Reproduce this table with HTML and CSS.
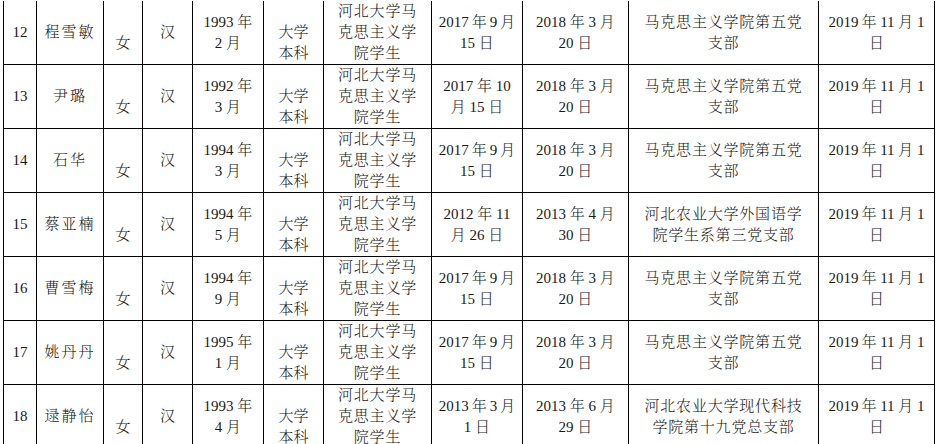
FILE: index.html
```html
<!DOCTYPE html>
<html lang="zh">
<head>
<meta charset="utf-8">
<title>名单</title>
<link rel="stylesheet" href="styles.css">
</head>
<body>
<table class="roster">
  <colgroup>
    <col class="c-no"><col class="c-name"><col class="c-sex"><col class="c-nat"><col class="c-birth"><col class="c-edu"><col class="c-unit"><col class="c-d1"><col class="c-d2"><col class="c-branch"><col class="c-d3">
  </colgroup>
  <tbody>
    <tr>
      <td>12</td><td class="name">程雪敏</td><td><br>女</td><td>汉</td><td>1993 年<br>2 月</td><td><br>大学<br>本科</td><td class="wide">河北大学马<br>克思主义学<br>院学生</td><td>2017&thinsp;年&thinsp;9&thinsp;月<br>15 日</td><td>2018 年 3 月<br>20 日</td><td class="wide">马克思主义学院第五党<br>支部</td><td>2019&thinsp;年 11 月 1<br>日</td>
    </tr>
    <tr>
      <td>13</td><td class="name">尹璐</td><td><br>女</td><td>汉</td><td>1992 年<br>3 月</td><td><br>大学<br>本科</td><td class="wide">河北大学马<br>克思主义学<br>院学生</td><td>2017 年 10<br>月 15 日</td><td>2018 年 3 月<br>20 日</td><td class="wide">马克思主义学院第五党<br>支部</td><td>2019&thinsp;年 11 月 1<br>日</td>
    </tr>
    <tr>
      <td>14</td><td class="name">石华</td><td><br>女</td><td>汉</td><td>1994 年<br>3 月</td><td><br>大学<br>本科</td><td class="wide">河北大学马<br>克思主义学<br>院学生</td><td>2017&thinsp;年&thinsp;9&thinsp;月<br>15 日</td><td>2018 年 3 月<br>20 日</td><td class="wide">马克思主义学院第五党<br>支部</td><td>2019&thinsp;年 11 月 1<br>日</td>
    </tr>
    <tr>
      <td>15</td><td class="name">蔡亚楠</td><td><br>女</td><td>汉</td><td>1994 年<br>5 月</td><td><br>大学<br>本科</td><td class="wide">河北大学马<br>克思主义学<br>院学生</td><td>2012 年 11<br>月 26 日</td><td>2013 年 4 月<br>30 日</td><td class="wide">河北农业大学外国语学<br>院学生系第三党支部</td><td>2019&thinsp;年 11 月 1<br>日</td>
    </tr>
    <tr>
      <td>16</td><td class="name">曹雪梅</td><td><br>女</td><td>汉</td><td>1994 年<br>9 月</td><td><br>大学<br>本科</td><td class="wide">河北大学马<br>克思主义学<br>院学生</td><td>2017&thinsp;年&thinsp;9&thinsp;月<br>15 日</td><td>2018 年 3 月<br>20 日</td><td class="wide">马克思主义学院第五党<br>支部</td><td>2019&thinsp;年 11 月 1<br>日</td>
    </tr>
    <tr>
      <td>17</td><td class="name">姚丹丹</td><td><br>女</td><td>汉</td><td>1995 年<br>1 月</td><td><br>大学<br>本科</td><td class="wide">河北大学马<br>克思主义学<br>院学生</td><td>2017&thinsp;年&thinsp;9&thinsp;月<br>15 日</td><td>2018 年 3 月<br>20 日</td><td class="wide">马克思主义学院第五党<br>支部</td><td>2019&thinsp;年 11 月 1<br>日</td>
    </tr>
    <tr>
      <td>18</td><td class="name">逯静怡</td><td><br>女</td><td>汉</td><td>1993 年<br>4 月</td><td><br>大学<br>本科</td><td class="wide">河北大学马<br>克思主义学<br>院学生</td><td>2013&thinsp;年&thinsp;3&thinsp;月<br>1 日</td><td>2013 年 6 月<br>29 日</td><td class="wide">河北农业大学现代科技<br>学院第十九党总支部</td><td>2019&thinsp;年 11 月 1<br>日</td>
    </tr>
  </tbody>
</table>
</body>
</html>
```
FILE: styles.css
```css
html, body {
  margin: 0;
  padding: 0;
  background: #fff;
}

body {
  padding: 1px 0 0 3px;
  font-family: "Liberation Serif", "Noto Serif CJK SC", "Noto Sans CJK SC", serif;
  font-size: 15px;
  font-weight: 300;
  line-height: 21px;
  color: #1a1a1a;
}

.roster {
  border-collapse: separate;
  border-spacing: 0;
  table-layout: fixed;
  width: 932px;
  border-left: 1px solid #000;
}

.roster td {
  height: 63px;
  padding: 0 2px;
  box-sizing: border-box;
  border-right: 1px solid #000;
  border-bottom: 1px solid #000;
  text-align: center;
  vertical-align: middle;
  white-space: nowrap;
  overflow: hidden;
}

.roster .name {
  letter-spacing: 2px;
}

.roster .wide {
  letter-spacing: 0.8px;
}

.c-no { width: 33px; }
.c-name { width: 67px; }
.c-sex { width: 39px; }
.c-nat { width: 50px; }
.c-birth { width: 71px; }
.c-edu { width: 60px; }
.c-unit { width: 108px; }
.c-d1 { width: 91px; }
.c-d2 { width: 106px; }
.c-branch { width: 190px; }
.c-d3 { width: 116px; }
```
